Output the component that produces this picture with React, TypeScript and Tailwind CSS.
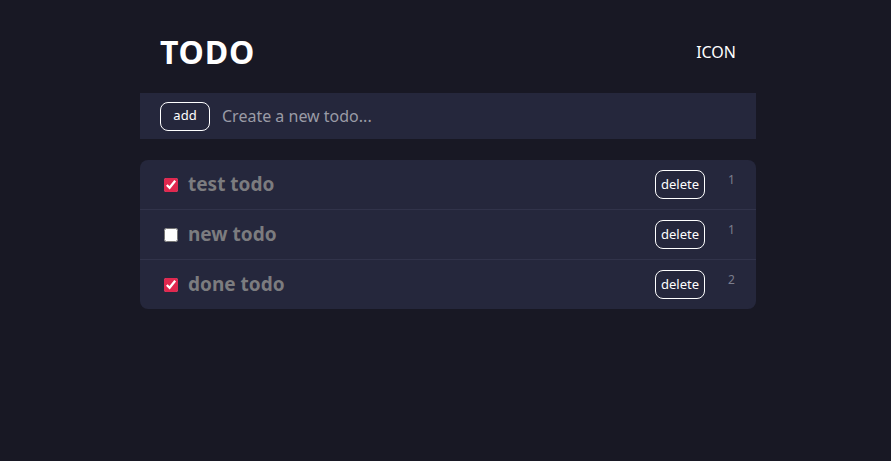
import React, { useState } from 'react';

interface Todo {
  id: number;
  text: string;
  done: boolean;
  count: number;
}

const initialTodos: Todo[] = [
  { id: 1, text: 'test todo', done: true, count: 1 },
  { id: 2, text: 'new todo', done: false, count: 1 },
  { id: 3, text: 'done todo', done: true, count: 2 },
];

const App: React.FC = () => {
  const [todos, setTodos] = useState<Todo[]>(initialTodos);
  const [draft, setDraft] = useState('');

  const toggle = (id: number) =>
    setTodos(todos.map((t) => (t.id === id ? { ...t, done: !t.done } : t)));

  return (
    <div
      className="flex min-h-screen w-full justify-center bg-[#181824] pl-[5px] text-white"
      style={{ fontFamily: '"Noto Sans", "Open Sans", sans-serif' }}
    >
      <div className="w-[616px]">
        <header className="flex h-[93px] items-center justify-between px-5 pt-[11px]">
          <h1 className="text-[32px] font-bold leading-none tracking-wide">TODO</h1>
          <span className="text-[16px]">ICON</span>
        </header>

        <div className="flex h-[46px] items-center gap-3 bg-[#25273c] px-5">
          <button className="h-[29px] w-[50px] rounded-[8px] border border-white text-[13px] text-white">
            add
          </button>
          <input
            value={draft}
            onChange={(e) => setDraft(e.target.value)}
            placeholder="Create a new todo..."
            className="flex-1 bg-transparent text-[16px] text-white outline-none placeholder:text-[#9a9ba6]"
          />
        </div>

        <ul className="mt-[21px] overflow-hidden rounded-[8px] bg-[#25273c]">
          {todos.map((t, i) => (
            <li
              key={t.id}
              className={`flex items-center py-[10px] pl-6 pr-5 ${
                i < todos.length - 1 ? 'border-b border-[#31334a]' : ''
              }`}
            >
              <input
                type="checkbox"
                checked={t.done}
                onChange={() => toggle(t.id)}
                className="h-[14px] w-[14px] accent-[#e0284f]"
              />
              <span className="ml-[10px] flex-1 text-[19px] font-bold text-[#7c7c7f]">{t.text}</span>
              <button className="h-[29px] w-[50px] rounded-[8px] border border-white text-[13px] text-white">
                delete
              </button>
              <span className="ml-[23px] w-[8px] self-start pt-[1px] text-[12px] text-[#7b7d8c]">
                {t.count}
              </span>
            </li>
          ))}
        </ul>
      </div>
    </div>
  );
};

export default App;
